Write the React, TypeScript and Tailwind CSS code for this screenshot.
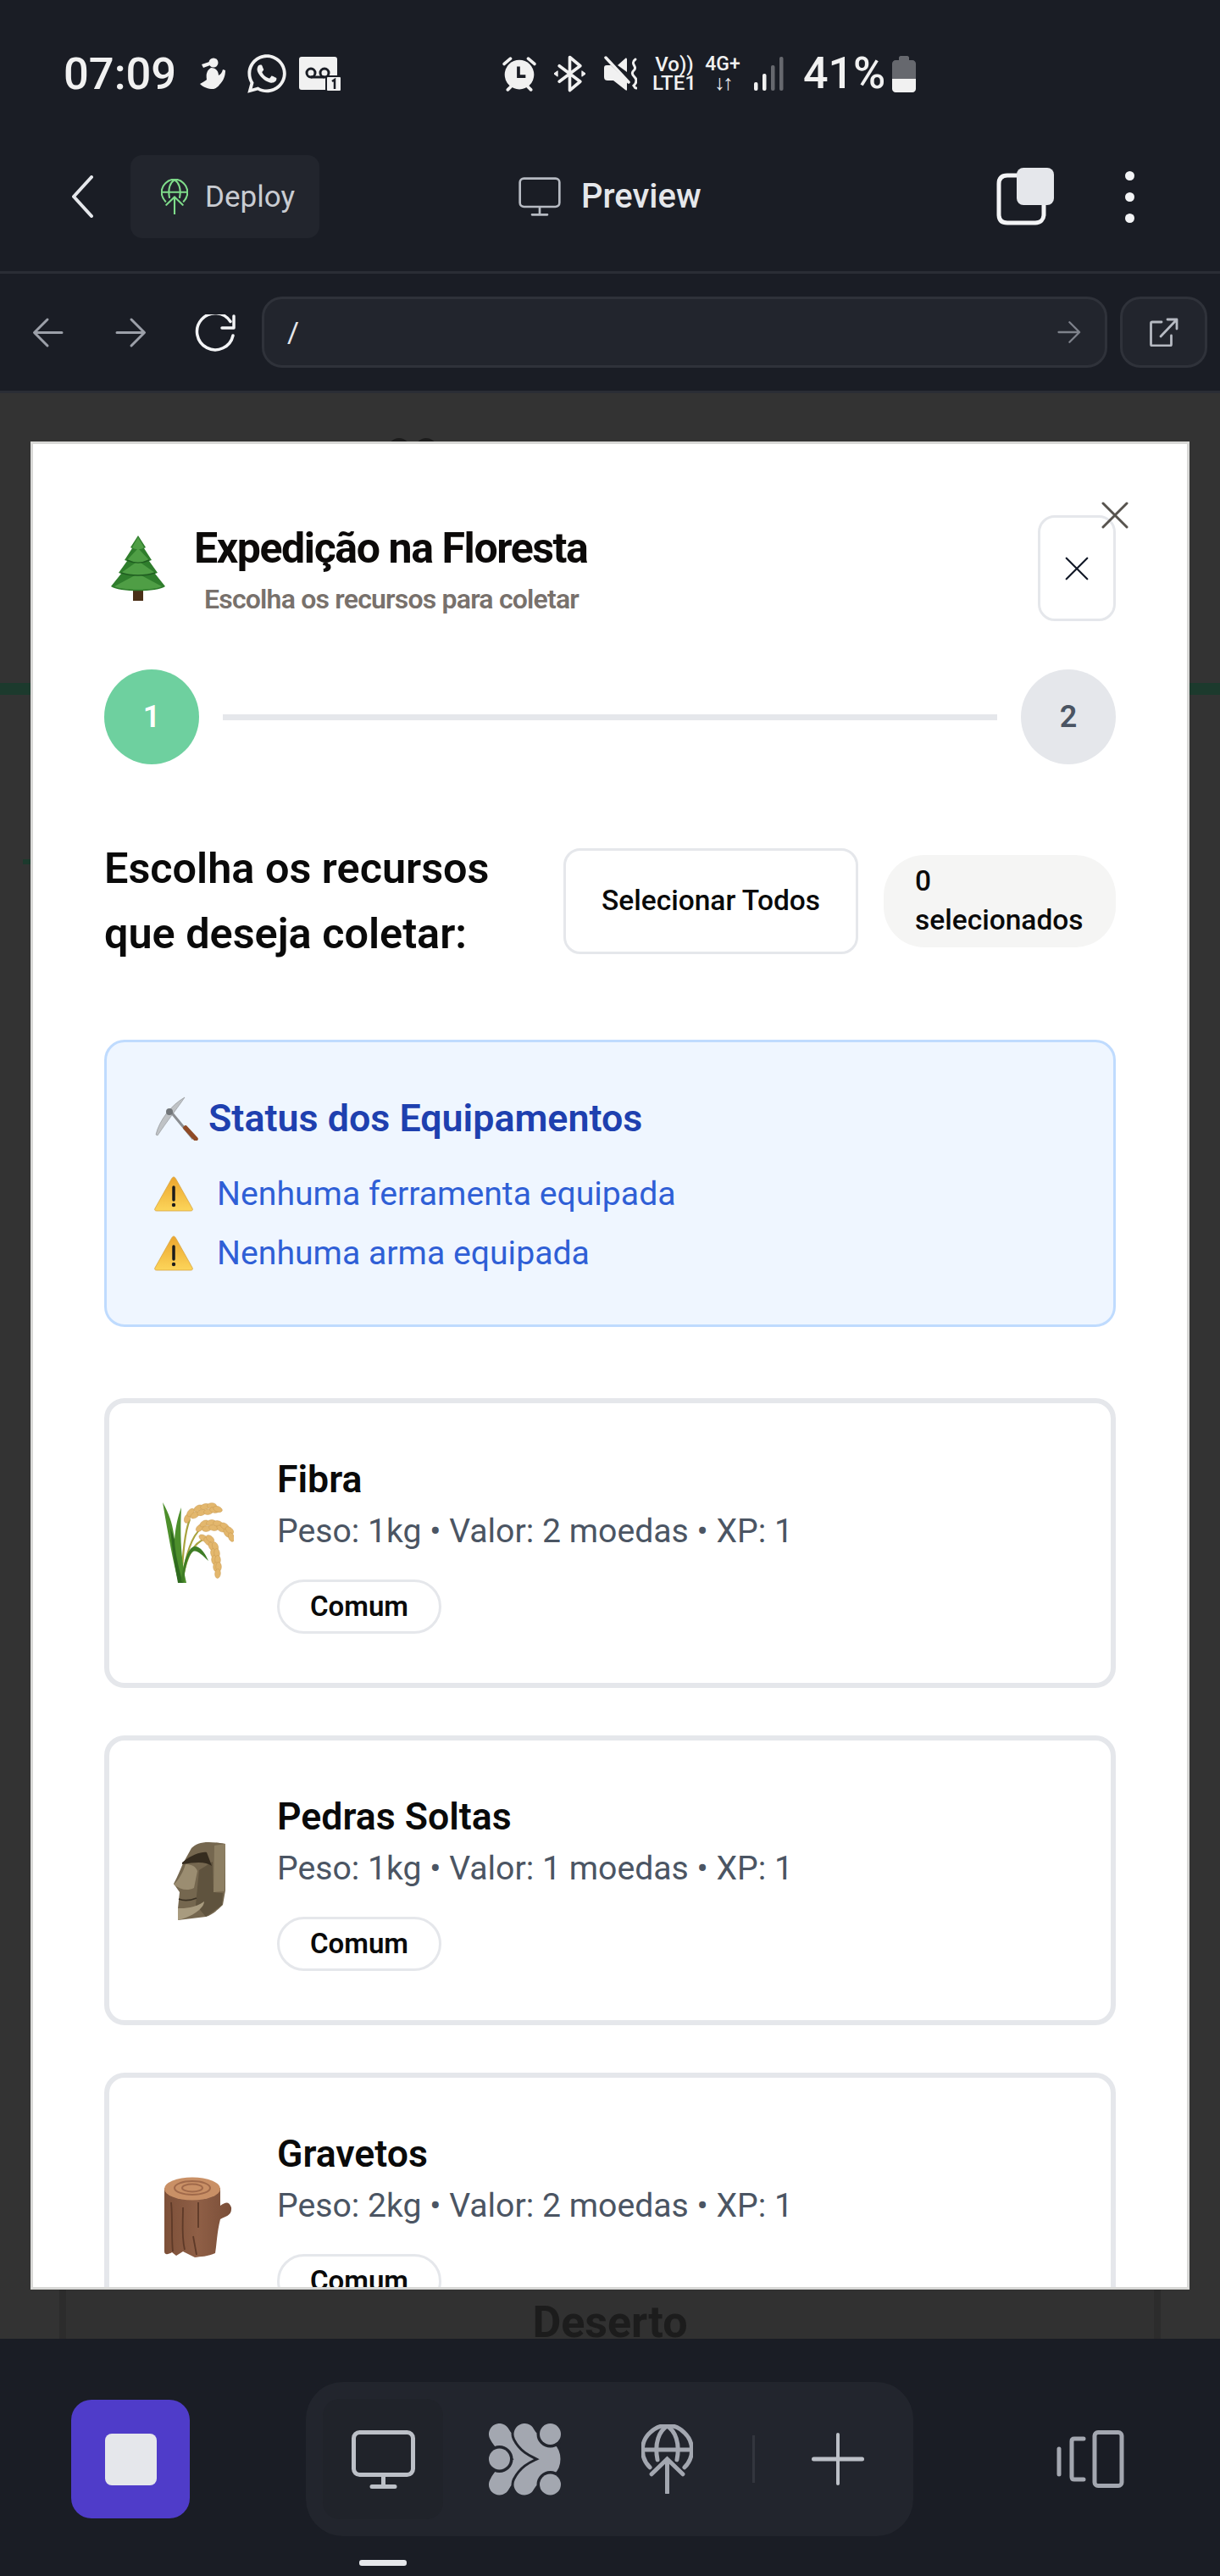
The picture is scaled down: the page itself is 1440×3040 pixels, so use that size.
import React from "react";
import { FaWhatsapp } from "react-icons/fa";

const Chevron = () => (
  <svg width="25" height="50" viewBox="0 0 25 50" fill="none" stroke="#e5e7eb" strokeWidth="4" strokeLinecap="round" strokeLinejoin="round"><path d="M23 2 2 25l21 23" /></svg>
);

const Globe = ({ size, color, w = 2 }: { size: number; color: string; w?: number }) => (
  <svg width={size} height={size * 1.34} viewBox="0 0 61 82" fill="none" stroke={color} strokeWidth={w} strokeLinecap="round">
    <path d="M10 51A29 29 0 1 1 51 51" />
    <path d="M3 30h55" />
    <path d="M19 42C15 22 21 8 30.500 2c9.500 6 15.500 20 11.500 40" />
    <path d="M30.500 81V41M12 59l18.500-18L49 59" />
  </svg>
);

const Monitor = ({ w, h, color, sw }: { w: number; h: number; color: string; sw: number }) => (
  <svg width={w} height={h} viewBox="0 0 75 69" fill="none" stroke={color} strokeWidth={sw} strokeLinecap="round" strokeLinejoin="round">
    <rect x="2.500" y="2.500" width="70" height="50" rx="7" />
    <path d="M37.500 53v13M24 66.500h27" />
  </svg>
);

const Arrow = ({ dir, color, w = 37 }: { dir: "l" | "r"; color: string; w?: number }) => (
  <svg width={w} height={w} viewBox="0 0 37 37" fill="none" stroke={color} strokeWidth="3" strokeLinecap="round" strokeLinejoin="round" className={dir === "r" ? "rotate-180" : ""}>
    <path d="M35 18.500H3M18 3 2.500 18.500 18 34" />
  </svg>
);

const Alarm = () => (
  <svg width="40" height="42" viewBox="0 0 38 40" fill="#f1f1f1">
    <circle cx="19" cy="21" r="16.500" />
    <path d="M2 9 9 3M36 9l-7-6M6 38l4-4M32 38l-4-4" stroke="#f1f1f1" strokeWidth="3.500" strokeLinecap="round" />
    <path d="M18 12v11h8" fill="none" stroke="#1a1d25" strokeWidth="3.500" />
  </svg>
);

const Bluetooth = () => (
  <svg width="37" height="44" viewBox="0 0 36 42" fill="none" stroke="#f1f1f1" strokeWidth="3.500" strokeLinejoin="round" strokeLinecap="round">
    <path d="M6 12 30 30 18 40V2l12 10L6 30" />
    <path d="M0 21l4-3v6zM36 21l-4-3v6z" fill="#f1f1f1" strokeWidth="1" />
  </svg>
);

const Mute = () => (
  <svg width="40" height="42" viewBox="0 0 40 42" fill="#f1f1f1">
    <path d="M1 14c0-2 1-3 3-3h5l19 19v10c0 1-1 1-2 0L12 29H5c-2 0-4-1-4-4zM17 11l9-8c1-1 2 0 2 1v15z" />
    <path d="M3 2l27 29" stroke="#f1f1f1" strokeWidth="3.500" strokeLinecap="round" />
    <path d="M38 4c-7 5 2 8-1 12-3 3-4 5 0 9 3 3 3 6-1 10 1 1 1 3 3 3" fill="none" stroke="#f1f1f1" strokeWidth="3" strokeLinecap="round" />
  </svg>
);

const Signal = () => (
  <svg width="38" height="42" viewBox="0 0 36 42">
    <rect x="0" y="31" width="4.500" height="10" rx="2" fill="#f1f1f1" />
    <rect x="10" y="21" width="4.500" height="20" rx="2" fill="#f1f1f1" />
    <rect x="20" y="11" width="4.500" height="30" rx="2" fill="#66686e" />
    <rect x="30" y="1" width="4.500" height="40" rx="2" fill="#66686e" />
  </svg>
);

const Battery = () => (
  <svg width="28" height="44" viewBox="0 0 28 44">
    <path d="M8 6V3c0-1 1-2 2-2h8c1 0 2 1 2 2v3h4c2 0 4 2 4 4v18H0V10c0-2 2-4 4-4z" fill="#66686e" />
    <path d="M0 28h28v12c0 2-2 4-4 4H4c-2 0-4-2-4-4z" fill="#f1f1f1" />
  </svg>
);

const Runner = () => (
  <svg width="33" height="38" viewBox="0 0 33 38" fill="#f1f1f1">
    <circle cx="17" cy="6" r="5.500" />
    <path d="M3 8l9-3 1 4-8 3z" />
    <path d="M14 12c6 0 9 4 9 9 2-1 4-3 5-7l3 1c0 8-3 13-7 17-2 3-5 5-8 5-5 0-11-2-15-6 3-2 6-3 8-5-1-6 0-11 5-14z" />
  </svg>
);

const Voicemail = () => (
  <svg width="50" height="41" viewBox="0 0 50 41">
    <rect x="0" y="0" width="45" height="39" rx="3" fill="#f1f1f1" />
    <circle cx="14" cy="19" r="5" fill="none" stroke="#1a1d25" strokeWidth="3" />
    <circle cx="30" cy="19" r="5" fill="none" stroke="#1a1d25" strokeWidth="3" />
    <path d="M14 24h16" stroke="#1a1d25" strokeWidth="3" />
    <rect x="32" y="23" width="18" height="18" rx="2" fill="#f1f1f1" stroke="#1a1d25" strokeWidth="2" />
    <path d="M39 29l3-2v11" fill="none" stroke="#1a1d25" strokeWidth="2.500" />
  </svg>
);

const CopyIcon = () => (
  <svg width="68" height="68" viewBox="0 0 68 68">
    <path d="M24 9H13C6 9 3 13 3 19v36c0 6 3 10 10 10h33c6 0 10-4 10-10V44" fill="none" stroke="#f3f4f6" strokeWidth="5" strokeLinecap="round" />
    <rect x="24" y="0" width="44" height="44" rx="8" fill="#e5e7eb" />
  </svg>
);

const External = () => (
  <svg width="34" height="34" viewBox="0 0 34 34" fill="none" stroke="#b6bac2" strokeWidth="2.800" strokeLinecap="round" strokeLinejoin="round">
    <path d="M14 5H3a1.500 1.500 0 0 0-1.500 1.500v25A1.500 1.500 0 0 0 3 33h21a1.500 1.500 0 0 0 1.500-1.500V21" />
    <path d="M13 22 32 2M21 2h11v11" />
  </svg>
);

const Reload = () => (
  <svg width="52" height="46" viewBox="0 0 52 46" fill="none" stroke="#f3f4f6" strokeWidth="3.500" strokeLinecap="round" strokeLinejoin="round">
    <path d="M43 8.500A21.500 21.500 0 1 0 46 25" />
    <path d="M47 2v14H33" />
  </svg>
);

const Blobs = () => (
  <svg width="85" height="85" viewBox="0 0 85 85" fill="#a3a7b0" stroke="none">
    <path d="M12.500 12.500C22 32 42 26 42 42S22 52 12.500 72" fill="none" stroke="#a3a7b0" strokeWidth="25" strokeLinecap="round" />
    <circle cx="12.500" cy="42" r="16" fill="#22252d" />
    <circle cx="12.500" cy="42" r="12.500" />
    <path d="M42 12.500C52 32 72 26 72 42S52 52 42 72" fill="none" stroke="#22252d" strokeWidth="31" strokeLinecap="round" />
    <path d="M42 12.500C52 32 72 26 72 42S52 52 42 72" fill="none" stroke="#a3a7b0" strokeWidth="25" strokeLinecap="round" />
    <circle cx="72.500" cy="12.500" r="16" fill="#22252d" />
    <circle cx="72.500" cy="12.500" r="12.500" />
    <circle cx="72.500" cy="72" r="16" fill="#22252d" />
    <circle cx="72.500" cy="72" r="12.500" />
  </svg>
);

const Tree = () => (
  <svg width="66" height="77" viewBox="0 0 66 77">
    <rect x="27" y="63" width="12" height="14" fill="#4a2f17" />
    <path d="M33 0 42 14 40 15 49 29 46 30 56 44 53 45 65 60C56 67 10 67 1 60L13 45 10 44 20 30 17 29 26 15 24 14z" fill="#2f7d2c" />
    <path d="M33 2 40 14C37 17 29 17 26 14zM33 15 46 29C40 33 26 33 20 29zM33 30 53 44C44 48 22 48 13 44zM33 45 61 60C50 65 16 65 5 60z" fill="#4f9e45" />
    <path d="M20 29C28 33 38 33 46 29M13 44C24 48 42 48 53 44" fill="none" stroke="#1f5c20" strokeWidth="1.500" />
  </svg>
);

const grains: [number, number, number][] = [
  [29, 19, -70], [33, 12, -50], [38, 15, -30], [42, 7, -30], [46, 12, -20], [50, 5, -15], [54, 11, -10], [58, 4, 0], [61, 9, 10], [65, 8, 20],
  [44, 30, -40], [49, 25, -30], [52, 31, -10], [57, 24, -10], [60, 30, 10], [65, 25, 10], [69, 31, 30], [73, 28, 30], [76, 36, 60], [79, 33, 40], [81, 41, 70],
  [48, 42, 30], [53, 46, 50], [56, 43, 40], [58, 52, 60], [62, 52, 70], [60, 60, 80], [64, 60, 85], [61, 68, 85], [65, 68, 90], [63, 76, 90], [66, 76, 90], [65, 84, 95],
];

const Rice = () => (
  <svg width="84" height="96" viewBox="0 0 84 96">
    <path d="M22 92C24 60 26 35 32 20M23 90C28 60 34 40 46 30M24 88C28 65 36 48 50 43" fill="none" stroke="#a9a33f" strokeWidth="2.200" />
    <path d="M19 95C12 70 6 35 0 0 8 14 12 26 14 44 15 30 18 16 22 6 21 30 20 60 28 95z" fill="#4d8f2c" />
    <path d="M9 30C11 55 15 78 18 95H24C17 72 14 52 14 44z" fill="#2f6a1f" />
    <path d="M22 93C24 72 30 52 38 52 45 52 50 60 54 69 46 62 41 56 36 58 30 62 26 78 25 95z" fill="#3f7d26" />
    {grains.map(([x, y, r]) => (
      <ellipse key={`${x}-${y}`} cx={x} cy={y} rx="5.500" ry="3.300" fill="#e3b76d" stroke="#c99a50" strokeWidth="0.500" transform={`rotate(${r} ${x} ${y})`} />
    ))}
  </svg>
);

const Moai = () => (
  <svg width="62" height="94" viewBox="0 0 62 94">
    <path d="M21 9C28 2 38 0 61 4V59L58 76C50 84 44 88 38 90L5 94 5 80 7 61 0 51C4 44 8 34 11 27z" fill="#75674f" />
    <path d="M48 6 61 4 60 60 47 61z" fill="#8d7f63" />
    <path d="M46 25 47 61 58 62 57 76 38 90 26 76 30 35z" fill="#5f533e" />
    <path d="M10 26C22 16 34 13 39 14L45 30C38 25 28 25 10 28z" fill="#352c1f" />
    <path d="M14 28C20 28 26 30 28 36L24 56C16 60 8 58 0 52 6 46 11 38 14 28z" fill="#9b8d71" />
    <path d="M6 69C13 72 22 70 27 68" fill="none" stroke="#3a3123" strokeWidth="1.800" />
    <path d="M5 80C14 80 24 80 36 72 36 80 22 90 5 94z" fill="#a89b7f" />
  </svg>
);

const Log = () => (
  <svg width="80" height="96" viewBox="0 0 80 96">
    <defs>
      <linearGradient id="lg" x1="0" y1="0" x2="1" y2="0"><stop offset="0" stopColor="#7d5039" /><stop offset="0.5" stopColor="#8f5f46" /><stop offset="1" stopColor="#7a4e38" /></linearGradient>
    </defs>
    <path d="M0 13V88C0 92 4 92 9 89L14 93 22 88 36 95C42 94 52 94 60 90 62 78 62 66 66 50 72 46 80 46 79 36 76 28 72 30 66 34V13z" fill="url(#lg)" />
    <path d="M8 30C10 50 8 70 10 88M22 36C22 55 20 70 24 86M40 30V60M34 70 38 92" fill="none" stroke="#5e3a28" strokeWidth="1.800" />
    <ellipse cx="33" cy="14" rx="33" ry="13.500" fill="#c99066" />
    <ellipse cx="33" cy="13" rx="21" ry="8" fill="none" stroke="#a0694a" strokeWidth="2" />
    <ellipse cx="33" cy="13" rx="12" ry="4.500" fill="none" stroke="#a0694a" strokeWidth="2" />
  </svg>
);

const Pick = () => (
  <svg width="52" height="52" viewBox="0 0 52 52" fill="none">
    <path d="M2 45C6 28 20 10 36 1 28 13 16 28 4 46z" fill="#bfc2c5" stroke="#8b8e92" strokeWidth="0.600" />
    <path d="M18 16 46 50" stroke="#8b8e92" strokeWidth="3" />
    <path d="M37 37 49 50" stroke="#8f4a26" strokeWidth="5.500" strokeLinecap="round" />
    <circle cx="18" cy="18" r="4" fill="#72767a" />
  </svg>
);

const Warn = ({ id }: { id: string }) => (
  <svg width="46" height="42" viewBox="0 0 46 42">
    <defs>
      <linearGradient id={id} x1="0" y1="0" x2="0" y2="1"><stop offset="0" stopColor="#eba52e" /><stop offset="1" stopColor="#fcd55a" /></linearGradient>
    </defs>
    <path d="M23 1C24 1 25 2 26 4L45 38C46 40 45 41 43 41H3C1 41 0 40 1 38L20 4C21 2 22 1 23 1z" fill={`url(#${id})`} stroke="#d9a440" strokeWidth="0.800" />
    <path d="M23 13v15" stroke="#1c1c1c" strokeWidth="3.500" strokeLinecap="round" />
    <circle cx="23" cy="34" r="2.200" fill="#1c1c1c" />
  </svg>
);

const Close = ({ size, color, sw }: { size: number; color: string; sw: number }) => (
  <svg width={size} height={size} viewBox="0 0 32 32" fill="none" stroke={color} strokeWidth={sw} strokeLinecap="round"><path d="M2 2l28 28M30 2 2 30" /></svg>
);

const resources = [
  { name: "Fibra", peso: 1, valor: 2, icon: <Rice />, shift: "pl-[12px]" },
  { name: "Pedras Soltas", peso: 1, valor: 1, icon: <Moai />, shift: "pl-[16px]" },
  { name: "Gravetos", peso: 2, valor: 2, icon: <Log />, shift: "pl-[12px]" },
];

export default function App() {
  return (
    <div className="flex h-[3040px] w-[1440px] flex-col overflow-hidden bg-[#1a1d25] font-['Roboto',sans-serif]">
      {/* status bar */}
      <div className="flex h-[174px] shrink-0 items-center pl-[75px] text-[#f1f1f1]">
        <span className="w-[132px] text-[52.500px] font-medium leading-none">07:09</span>
        <span className="ml-[28px] flex items-center"><Runner /></span>
        <span className="ml-[21px] flex items-center"><FaWhatsapp size={52} /></span>
        <span className="ml-[12px] flex items-center"><Voicemail /></span>
        <span className="ml-[190px] flex items-center"><Alarm /></span>
        <span className="ml-[21px] flex items-center"><Bluetooth /></span>
        <span className="ml-[21px] flex items-center"><Mute /></span>
        <div className="ml-[18px] flex w-[52px] flex-col items-center text-[24px] font-medium leading-[22px]">
          <span>Vo))</span>
          <span>LTE1</span>
        </div>
        <div className="ml-[10px] flex w-[42px] flex-col items-center text-[23px] font-medium leading-[22px]">
          <span>4G+</span>
          <span className="text-[25px] font-bold tracking-[-0.1em]">↓↑</span>
        </div>
        <span className="ml-[15px] flex items-center"><Signal /></span>
        <span className="ml-[21px] w-[97px] text-[52px] font-medium leading-none">41%</span>
        <span className="ml-[8px] flex items-center"><Battery /></span>
      </div>

      {/* app header */}
      <div className="flex h-[149px] shrink-0 items-center border-b-[3px] border-[#2a2d35] pb-[30px] pl-[85px]">
        <Chevron />
        <div className="ml-[44px] flex h-[98px] w-[223px] items-center rounded-[14px] bg-[#22252d] pl-[36px]">
          <Globe size={32} color="#7fdc8a" w={4} />
          <span className="ml-[20px] text-[35px] leading-none text-[#c9ccd2]">Deploy</span>
        </div>
        <div className="ml-[235px] flex w-[564px] items-center">
          <Monitor w={50} h={46} color="#b6bac2" sw={4} />
          <span className="ml-[24px] text-[40px] font-medium leading-none text-[#e5e7eb]">Preview</span>
        </div>
        <CopyIcon />
        <div className="ml-[84px] flex flex-col gap-[14px]">
          <span className="size-[11px] rounded-full bg-[#f3f4f6]" />
          <span className="size-[11px] rounded-full bg-[#f3f4f6]" />
          <span className="size-[11px] rounded-full bg-[#f3f4f6]" />
        </div>
      </div>

      {/* url bar */}
      <div className="flex h-[141px] shrink-0 items-center border-b-[3px] border-[#2a2d35] pl-[38px]">
        <Arrow dir="l" color="#9ca0a9" />
        <div className="ml-[61px]"><Arrow dir="r" color="#9ca0a9" /></div>
        <div className="ml-[56px] mt-[4px]"><Reload /></div>
        <div className="ml-[28px] flex h-[84px] w-[998px] items-center justify-between rounded-[24px] border-[3px] border-[#2f323a] bg-[#22252d] pl-[27px] pr-[28px]">
          <span className="text-[34px] leading-none text-[#e5e7eb]">/</span>
          <Arrow dir="r" color="#7e828b" w={28} />
        </div>
        <div className="ml-[15px] flex h-[84px] w-[103px] items-center justify-center rounded-[24px] border-[3px] border-[#2f323a] bg-[#22252d]">
          <External />
        </div>
      </div>

      {/* dimmed page and modal */}
      <div className="relative flex-1 overflow-hidden bg-[#333333]">
        <div className="absolute left-0 right-0 top-[342px] h-[14px] bg-[#1c3a2d]" />
        <div className="absolute left-[27px] top-[550px] h-[6px] w-[12px] bg-[#1c3a2d]" />
        <div className="absolute left-[458px] top-[53px] flex gap-[6px]">
          <span className="size-[26px] rounded-full bg-[#1c1c1c]" />
          <span className="size-[26px] rounded-full bg-[#1c1c1c]" />
        </div>
        <div className="absolute bottom-0 left-[70px] right-[70px] h-[200px] border-x-[8px] border-[#2c2c2c] bg-[#313131] pt-[162px] text-center text-[52px] font-bold leading-[38px] text-[#1c1c1c]">Deserto</div>

        <div className="absolute left-[36px] top-[57px] h-[2181px] w-[1368px] overflow-hidden border-[3px] border-[#d8d8d6] bg-white px-[84px] pt-[84px]">
          <div className="absolute left-[1261px] top-[68px]"><Close size={32} color="#57534e" sw={3} /></div>
          <div className="flex h-[125px] items-start justify-between">
            <div className="flex items-center pl-[7px] pt-[11px]">
              <div className="mb-[7px]"><Tree /></div>
              <div className="ml-[33px] flex flex-col">
                <span className="text-[50px] font-bold leading-[56px] tracking-[-0.028em] text-[#0c0a09]">Expedição na Floresta</span>
                <span className="ml-[12px] mt-[11px] text-[32px] font-semibold leading-[42px] tracking-[-0.025em] text-[#78716c]">Escolha os recursos para coletar</span>
              </div>
            </div>
            <div className="flex h-[125px] w-[92px] items-center justify-center rounded-[20px] border-[3px] border-[#e5e7eb]">
              <Close size={28} color="#111827" sw={2.500} />
            </div>
          </div>

          <div className="mt-[57px] flex items-center">
            <div className="flex size-[112px] items-center justify-center rounded-full bg-[#6ed09f] text-[36px] font-semibold text-white">1</div>
            <div className="mx-[28px] h-[7px] flex-1 bg-[#e5e7eb]" />
            <div className="flex size-[112px] items-center justify-center rounded-full bg-[#e5e7eb] text-[36px] font-semibold text-[#4b5563]">2</div>
          </div>

          <div className="mt-[84px] flex items-center justify-between">
            <h2 className="text-[50.400px] font-semibold leading-[77px] text-[#0a0a0a]">Escolha os recursos<br />que deseja coletar:</h2>
            <div className="ml-auto flex h-[125px] w-[348px] items-center justify-center rounded-[20px] border-[3px] border-[#e5e7eb] text-[33.500px] font-medium text-[#0a0a0a]">Selecionar Todos</div>
            <div className="ml-[30px] flex h-[109px] w-[274px] items-center rounded-[48px] bg-[#f5f5f4] pl-[37px] text-[33.500px] font-medium leading-[46px] text-[#0a0a0a]">
              <span>0<br />selecionados</span>
            </div>
          </div>

          <div className="mt-[87px] h-[339px] rounded-[24px] border-[3px] border-[#bfdbfe] bg-[#eff6ff] pl-[56px] pt-[62px]">
            <div className="flex items-center">
              <Pick />
              <span className="ml-[12px] text-[44.800px] font-semibold leading-[56px] text-[#1e40af]">Status dos Equipamentos</span>
            </div>
            <div className="mt-[36px] flex h-[50px] items-center">
              <Warn id="w1" />
              <span className="ml-[28px] text-[39.200px] leading-[50px] text-[#2f5fd6]">Nenhuma ferramenta equipada</span>
            </div>
            <div className="mt-[20px] flex h-[50px] items-center">
              <Warn id="w2" />
              <span className="ml-[28px] text-[39.200px] leading-[50px] text-[#2f5fd6]">Nenhuma arma equipada</span>
            </div>
          </div>

          <div className="mt-[84px] flex flex-col gap-[56px]">
            {resources.map((r) => (
              <div key={r.name} className="flex h-[342px] shrink-0 items-start rounded-[24px] border-[6px] border-[#e5e7eb] pt-[65px]">
                <div className={`flex w-[198px] items-center justify-center self-center pb-[65px] ${r.shift}`}>{r.icon}</div>
                <div className="flex flex-col items-start">
                  <span className="text-[44.600px] font-semibold leading-[50px] text-[#0a0a0a]">{r.name}</span>
                  <span className="mt-[11px] text-[39.200px] leading-[50px] text-[#4b5563]">{`Peso: ${r.peso}kg • Valor: ${r.valor} moedas • XP: 1`}</span>
                  <span className="mt-[32px] flex h-[64px] w-[194px] items-center justify-center rounded-full border-[3px] border-[#e5e7eb] text-[33px] font-semibold text-[#0a0a0a]">Comum</span>
                </div>
              </div>
            ))}
          </div>
        </div>
      </div>

      {/* bottom nav */}
      <div className="relative flex h-[280px] shrink-0 items-center pl-[84px] pt-[4px]">
        <div className="flex size-[140px] items-center justify-center rounded-[24px] bg-[#4f3cc9]">
          <div className="size-[61px] rounded-[8px] bg-[#e5e7eb]" />
        </div>
        <div className="ml-[137px] flex h-[182px] w-[717px] items-center rounded-[44px] bg-[#22252d] pl-[20px]">
          <div className="flex size-[142px] items-center justify-center rounded-[20px] bg-[#20232a]">
            <Monitor w={75} h={69} color="#bcc0c7" sw={5} />
          </div>
          <div className="ml-[54px]"><Blobs /></div>
          <div className="ml-[95px]"><Globe size={61} color="#a3a7b0" w={5} /></div>
          <div className="ml-[70px] h-[56px] w-[3px] bg-[#33363e]" />
          <svg className="ml-[67px]" width="62" height="62" viewBox="0 0 62 62" fill="none" stroke="#bcc0c7" strokeLinecap="round"><path d="M2.500 31h57" strokeWidth="5" /><path d="M31 2v58" strokeWidth="4" /></svg>
        </div>
        <svg className="ml-[169px]" width="80" height="68" viewBox="0 0 80 68" fill="none" stroke="#a3a7b0" strokeWidth="5" strokeLinecap="round" strokeLinejoin="round">
          <path d="M3 22v30" />
          <path d="M32 10H21c-2 0-3 1-3 3v42c0 2 1 3 3 3h11" />
          <rect x="45" y="2.500" width="32" height="63" rx="4" />
        </svg>
        <div className="absolute left-[424px] top-[261px] h-[7px] w-[56px] rounded-[3px] bg-[#e5e7eb]" />
      </div>
    </div>
  );
}
